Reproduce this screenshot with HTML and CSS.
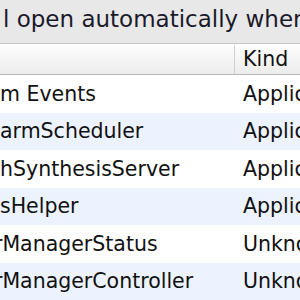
FILE: index.html
```html
<!DOCTYPE html>
<html lang="en">
<head>
    <meta charset="UTF-8">
    <title>Login Items</title>
    <link rel="stylesheet" href="styles.css">
</head>
<body>

    <div class="caption">l open automatically when you log in:</div>

    <div class="list">
        <div class="list-head">
            <div class="col-name"></div>
            <div class="col-kind">Kind</div>
        </div>

        <div class="row">
            <div class="col-name">m Events</div>
            <div class="col-kind">Application</div>
        </div>
        <div class="row">
            <div class="col-name">armScheduler</div>
            <div class="col-kind">Application</div>
        </div>
        <div class="row">
            <div class="col-name">hSynthesisServer</div>
            <div class="col-kind">Application</div>
        </div>
        <div class="row">
            <div class="col-name">sHelper</div>
            <div class="col-kind">Application</div>
        </div>
        <div class="row">
            <div class="col-name cut">rManagerStatus</div>
            <div class="col-kind">Unknown</div>
        </div>
        <div class="row">
            <div class="col-name cut">rManagerController</div>
            <div class="col-kind">Unknown</div>
        </div>
    </div>

</body>
</html>
```

FILE: styles.css
```css
* {
    margin: 0;
    padding: 0;
    box-sizing: border-box;
}

body {
    width: 300px;
    height: 300px;
    overflow: hidden;
    background: #e8e8e8;
    font-family: 'DejaVu Sans', 'Lucida Grande', sans-serif;
    color: #111;
}

/* Teks di atas daftar */
.caption {
    height: 44px;
    padding: 6px 0 0 3px;
    font-size: 23px;
    white-space: nowrap;
    overflow: hidden;
    color: #1a1a2a;
    border-bottom: 1px solid #c4c4c4;
}

.list {
    background: #fff;
}

.list-head {
    display: flex;
    height: 31px;
    background: linear-gradient(#fdfdfd, #ececec);
    border-top: 1px solid #fff;
    border-bottom: 1px solid #b8b8b8;
    font-size: 20.5px;
}

.list-head .col-kind {
    border-left: 1px solid #cfcfcf;
    padding-left: 8px;
    line-height: 29px;
}

.row {
    display: flex;
    height: 37.5px;
    align-items: center;
    font-size: 20.5px;
    white-space: nowrap;
}

.row:nth-child(odd) {
    background: #edf3fe;
}

.col-name {
    flex: 0 0 234px;
    overflow: hidden;
}

.col-name.cut {
    text-indent: -6px;
}

.col-kind {
    flex: 1 0 auto;
}

.row .col-kind {
    padding-left: 9px;
}
```
